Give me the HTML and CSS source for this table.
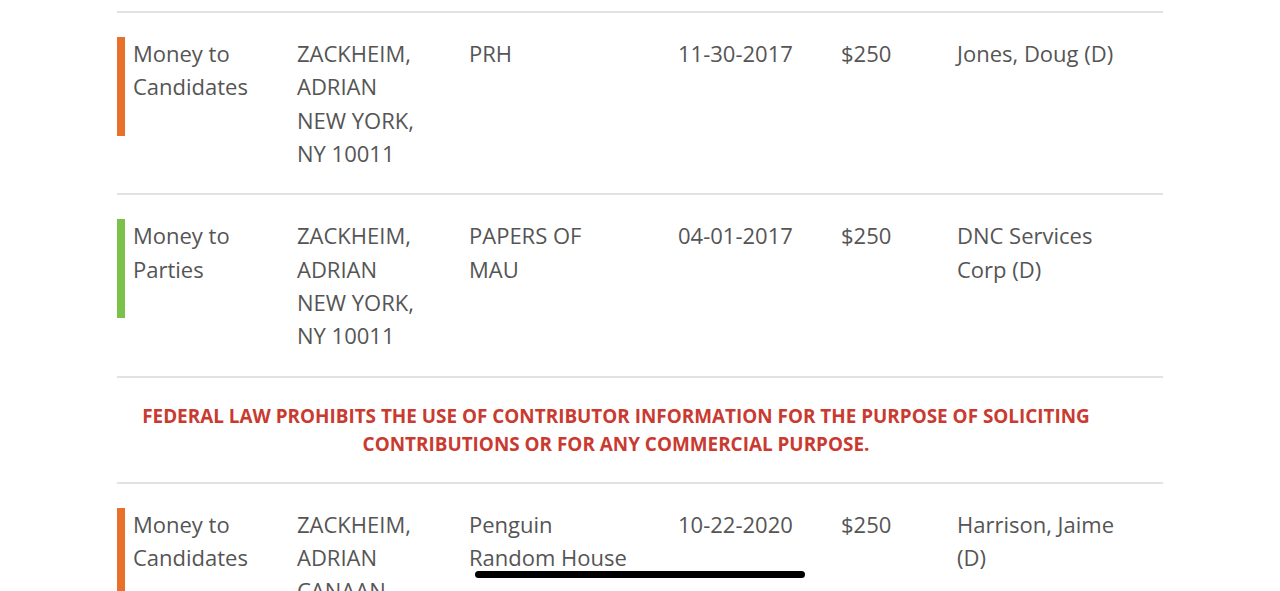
FILE: index.html
```html
<!DOCTYPE html>
<html lang="en">
<head>
<meta charset="utf-8">
<title>Contributions</title>
<link rel="stylesheet" href="styles.css">
</head>
<body>
<div class="table">
  <div class="row">
    <div class="cell type type-cand">Money to Candidates</div>
    <div class="cell contrib">ZACKHEIM, ADRIAN<br>NEW YORK, NY 10011</div>
    <div class="cell employer">PRH</div>
    <div class="cell date">11-30-2017</div>
    <div class="cell amount">$250</div>
    <div class="cell recip">Jones, Doug (D)</div>
  </div>
  <div class="row">
    <div class="cell type type-party">Money to Parties</div>
    <div class="cell contrib">ZACKHEIM, ADRIAN<br>NEW YORK, NY 10011</div>
    <div class="cell employer">PAPERS OF MAU</div>
    <div class="cell date">04-01-2017</div>
    <div class="cell amount">$250</div>
    <div class="cell recip">DNC Services Corp (D)</div>
  </div>
  <div class="notice">FEDERAL LAW PROHIBITS THE USE OF CONTRIBUTOR INFORMATION FOR THE PURPOSE OF SOLICITING CONTRIBUTIONS OR FOR ANY COMMERCIAL PURPOSE.</div>
  <div class="row">
    <div class="cell type type-cand">Money to Candidates</div>
    <div class="cell contrib">ZACKHEIM, ADRIAN<br>CANAAN, CT 06018</div>
    <div class="cell employer">Penguin Random House</div>
    <div class="cell date">10-22-2020</div>
    <div class="cell amount">$250</div>
    <div class="cell recip">Harrison, Jaime (D)</div>
  </div>
</div>
<div class="home-indicator"></div>
</body>
</html>
```
FILE: styles.css
```css
html, body {
  margin: 0;
  padding: 0;
  background: #ffffff;
  overflow: hidden;
}
body {
  font-family: "Open Sans", "Liberation Sans", sans-serif;
  color: #555555;
  font-size: 22px;
  line-height: 33.33px;
  padding-top: 11px;
}
.table {
  width: 1046px;
  margin-left: 117px;
  border-top: 2px solid #e2e2e2;
}
.row {
  display: grid;
  grid-template-columns: 180px 172px 209px 163px 116px 206px;
  padding: 24px 0 23px;
  border-bottom: 2px solid #e2e2e2;
}
.cell {
  padding-right: 20px;
}
.type {
  align-self: start;
  border-left: 8px solid #e8702a;
  padding-left: 8px;
  min-height: 99px;
  padding-right: 10px;
}
.type-party {
  border-left-color: #7cc24a;
}
.contrib {
  padding-right: 52px;
}
.employer {
  padding-right: 48px;
}
.recip {
  padding-right: 16px;
}
.notice {
  padding: 24px 48px 24px 0;
  border-bottom: 2px solid #e2e2e2;
  text-align: center;
  color: #c93a30;
  font-weight: 700;
  font-size: 18.9px;
  line-height: 28px;
}
.home-indicator {
  position: fixed;
  left: 475px;
  bottom: 13px;
  width: 330px;
  height: 7px;
  border-radius: 4px;
  background: #000000;
}
```
